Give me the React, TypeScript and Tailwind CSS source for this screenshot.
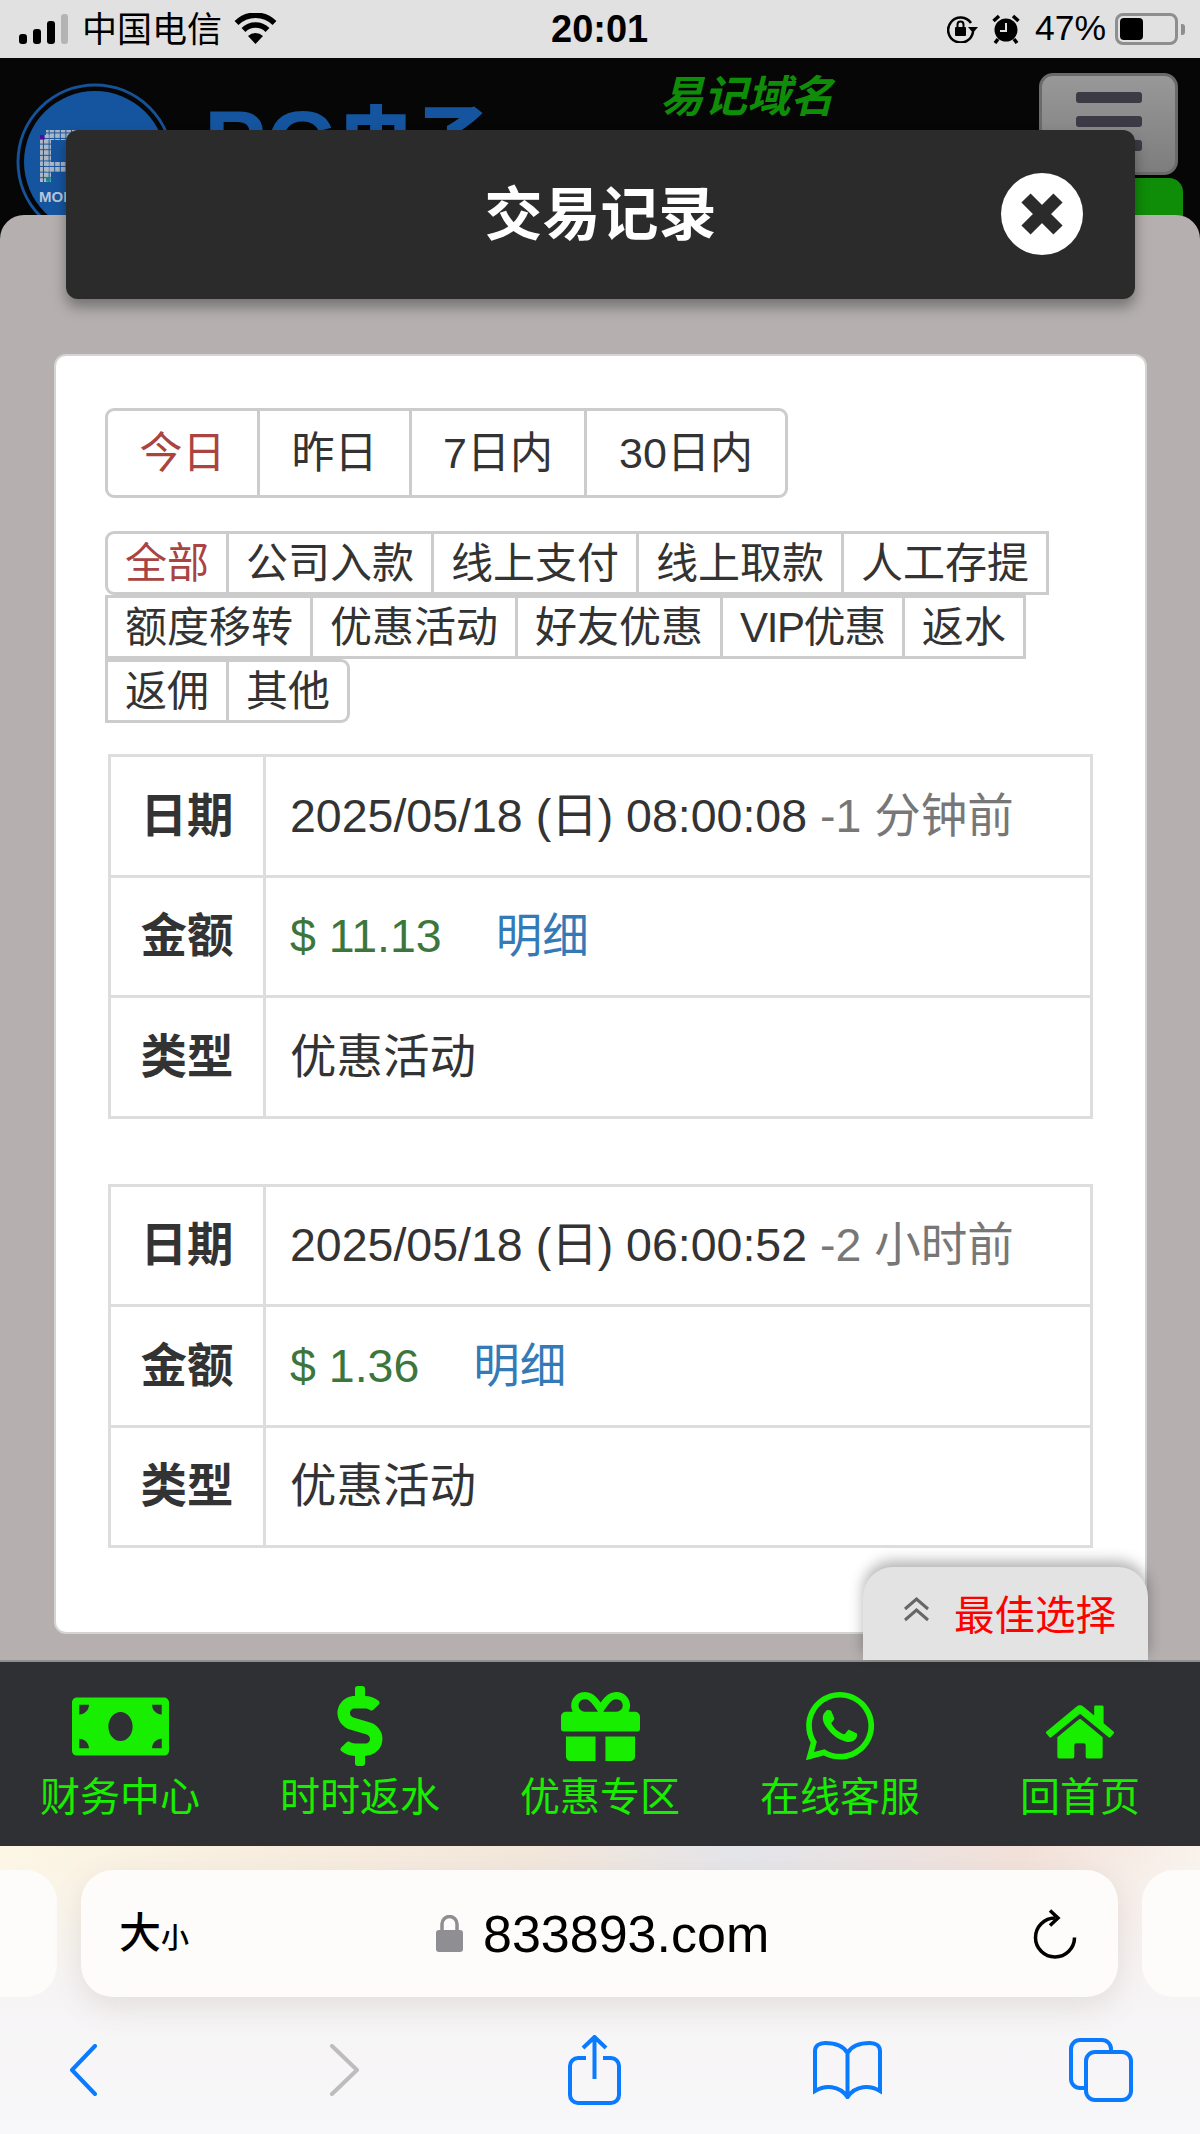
import React from 'react';
import { FaMoneyBill, FaDollarSign, FaGift, FaWhatsapp, FaHome } from 'react-icons/fa';

const cjk = "font-['Liberation_Sans','Noto_Sans_CJK_SC',sans-serif]";

const ranges = [
  { label: '今日', w: 'w-[152px]', on: true },
  { label: '昨日', w: 'w-[152px]' },
  { label: '7日内', w: 'w-[175px]' },
  { label: '30日内', w: 'w-[198px]' },
];

const typeRows = [
  [
    { label: '全部', on: true },
    { label: '公司入款' },
    { label: '线上支付' },
    { label: '线上取款' },
    { label: '人工存提' },
  ],
  [
    { label: '额度移转' },
    { label: '优惠活动' },
    { label: '好友优惠' },
    { label: 'VIP优惠', tight: true },
    { label: '返水' },
  ],
  [{ label: '返佣' }, { label: '其他' }],
];

const records = [
  { date: '2025/05/18 (日) 08:00:08', ago: '-1 分钟前', money: '$ 11.13', kind: '优惠活动' },
  { date: '2025/05/18 (日) 06:00:52', ago: '-2 小时前', money: '$ 1.36', kind: '优惠活动' },
];

const navItems = [
  { label: '财务中心', icon: <FaMoneyBill size={97} /> },
  { label: '时时返水', icon: <FaDollarSign size={80} /> },
  { label: '优惠专区', icon: <FaGift size={79} /> },
  { label: '在线客服', icon: <FaWhatsapp size={78} /> },
  { label: '回首页', icon: <FaHome size={68} className="mt-[12px]" /> },
];

function StatusBar() {
  return (
    <div className="flex h-[58px] items-center bg-[#e1e1e1] pl-[19px] pr-[15px] text-black">
      <div className="flex h-[30px] items-end gap-[6px]">
        <span className="h-[10px] w-[8px] rounded-[3px] bg-black" />
        <span className="h-[15px] w-[8px] rounded-[3px] bg-black" />
        <span className="h-[23px] w-[8px] rounded-[3px] bg-black" />
        <span className="h-[30px] w-[7px] rounded-[3px] bg-[#b4b4b4]" />
      </div>
      <span className="ml-[14px] text-[35px] leading-none">中国电信</span>
      <svg width="43" height="32" viewBox="0 0 43 32" className="ml-[12px]">
        <path d="M21.5 31 14 23a11 11 0 0 1 15 0z" fill="black" />
        <path d="M9.5 17a17 17 0 0 1 24 0" fill="none" stroke="black" strokeWidth="5.5" />
        <path d="M2.5 10a27 27 0 0 1 38 0" fill="none" stroke="black" strokeWidth="5.5" />
      </svg>
      <span className="ml-[274px] text-[38px] font-semibold leading-none">20:01</span>
      <div className="ml-auto flex items-center">
        <svg width="31" height="28" viewBox="0 0 31 28" fill="none" stroke="black" strokeWidth="2.5">
          <path d="M26 17a12.5 12.5 0 1 1-2-9" />
          <rect x="8" y="12" width="11" height="9" rx="1" fill="black" stroke="none" />
          <path d="M10.5 12V9.5a3 3 0 0 1 6 0V12" strokeWidth="2" />
          <path d="M21 12h10l-5 6z" fill="black" stroke="none" />
        </svg>
        <svg width="28" height="30" viewBox="0 0 28 30" className="ml-[14px]">
          <circle cx="14" cy="16" r="11.5" fill="black" />
          <path d="M14 9v8H8" fill="none" stroke="#e1e1e1" strokeWidth="2" />
          <path d="M1.5 7 7 2M26.5 7 21 2M6 25l-3 4M22 25l3 4" stroke="black" strokeWidth="3.5" />
        </svg>
        <span className="ml-[15px] text-[35.5px] leading-none">47%</span>
        <div className="ml-[9px] flex h-[32px] w-[63px] items-center rounded-[8px] border-[3px] border-[#8e8e8e] p-[2px]">
          <div className="h-full w-[23px] rounded-[4px] bg-black" />
        </div>
        <span className="ml-[3px] h-[11px] w-[4px] rounded-r-[3px] bg-[#8e8e8e]" />
      </div>
    </div>
  );
}

function Logo() {
  return (
    <svg width="160" height="160" viewBox="0 0 160 160" className="absolute left-[16px] top-[25px]">
      <defs>
        <pattern id="dots" width="5.6" height="5.6" patternUnits="userSpaceOnUse">
          <rect width="4.6" height="4.6" fill="#aeb6c2" />
        </pattern>
      </defs>
      <circle cx="79" cy="79" r="77" fill="none" stroke="#155298" strokeWidth="3" />
      <circle cx="79" cy="79" r="71" fill="#15559f" />
      <rect x="30" y="47" width="50" height="10" fill="url(#dots)" />
      <rect x="24" y="52" width="11" height="47" fill="url(#dots)" />
      <rect x="30" y="79" width="50" height="10" fill="url(#dots)" />
      <rect x="24" y="52" width="4.6" height="4.6" fill="#4a0fa0" />
      <rect x="30" y="94" width="4.6" height="4.6" fill="#0f8a8a" />
      <text x="23" y="119" fontSize="15" fontWeight="700" fill="#b9c6d8">
        MON
      </text>
    </svg>
  );
}

function SiteHeader() {
  return (
    <div className="relative h-full bg-[#060606]">
      <Logo />
      <div className="absolute left-[204px] top-[40px] flex items-start font-black leading-none text-[#15559f]">
        <span className="text-[93px]">PG</span>
        <span className="mt-[7px] text-[76px]">电子</span>
      </div>
      <span className="absolute left-[660px] top-[18px] text-[43.5px] font-bold italic leading-none text-[#0f8d08]">
        易记域名
      </span>
      <div className="absolute left-[1039px] top-[15px] flex h-[102px] w-[139px] flex-col items-center gap-[13px] rounded-[14px] border-[3px] border-[#6a6a6a] bg-[linear-gradient(180deg,#989898,#7d7d7d)] pt-[16px]">
        <span className="h-[11px] w-[66px] rounded-[3px] bg-[#3b3a45]" />
        <span className="h-[11px] w-[66px] rounded-[3px] bg-[#3b3a45]" />
        <span className="h-[11px] w-[66px] rounded-[3px] bg-[#3b3a45]" />
      </div>
      <div className="absolute left-[1100px] top-[120px] h-[40px] w-[83px] rounded-t-[14px] bg-[#0f8d08]" />
    </div>
  );
}

function RangeTabs() {
  return (
    <div className="flex h-[90px] w-fit overflow-hidden rounded-[9px] border-[3px] border-[#cccccc]">
      {ranges.map((r) => (
        <div
          key={r.label}
          className={`flex items-center justify-center border-r-[3px] border-[#cccccc] pt-[1px] text-[43px] last:border-r-0 ${r.w} ${r.on ? 'text-[#a94442]' : 'text-[#333333]'}`}
        >
          {r.label}
        </div>
      ))}
    </div>
  );
}

function TypeTabs() {
  return (
    <div className="mt-[33px] flex flex-col">
      {typeRows.map((row, i) => (
        <div key={i} className="flex">
          {row.map((t, j) => (
            <div
              key={t.label}
              className={`flex h-[64px] items-center whitespace-nowrap border-y-[3px] border-r-[3px] border-[#cccccc] px-[17px] text-[42px] ${j === 0 ? 'border-l-[3px]' : ''} ${t.on ? 'rounded-l-[9px] text-[#a94442]' : 'text-[#333333]'} ${i === 2 && j === 1 ? 'rounded-r-[9px]' : ''} ${t.tight ? 'tracking-[-1.4px]' : ''}`}
            >
              {t.label}
            </div>
          ))}
        </div>
      ))}
    </div>
  );
}

function RecordTable({ rec }: { rec: (typeof records)[number] }) {
  const rows = [
    {
      head: '日期',
      body: (
        <>
          <span className="text-[#333333]">{rec.date} </span>
          <span className="text-[#777777]">{rec.ago}</span>
        </>
      ),
    },
    {
      head: '金额',
      body: (
        <>
          <span className="text-[#3c763d]">{rec.money}</span>
          <span className="ml-[54px] text-[#337ab7]">明细</span>
        </>
      ),
    },
    { head: '类型', body: <span className="text-[#333333]">{rec.kind}</span> },
  ];
  return (
    <div className="ml-[3px] w-[985px] border-[3px] border-b-0 border-[#dddddd]">
      {rows.map((row) => (
        <div key={row.head} className="flex h-[120.5px] border-b-[3px] border-[#dddddd] pt-[2px] text-[46.5px]">
          <div className="-mt-[2px] flex w-[155px] items-center justify-center border-r-[3px] border-[#dddddd] pt-[2px] font-bold text-[#333333]">
            {row.head}
          </div>
          <div className="flex flex-1 items-center whitespace-pre pl-[24px]">{row.body}</div>
        </div>
      ))}
    </div>
  );
}

function RecordsModal() {
  return (
    <div className="absolute inset-x-0 bottom-0 top-[157px] rounded-t-[24px] bg-[#b5afaf]">
      <div className="ml-[54px] mt-[139px] h-[1280px] w-[1093px] rounded-[12px] border-2 border-[#d4d4d4] bg-white pl-[49px] pt-[52px]">
        <RangeTabs />
        <TypeTabs />
        <div className="mt-[31px] flex flex-col gap-[65px]">
          {records.map((rec) => (
            <RecordTable key={rec.date} rec={rec} />
          ))}
        </div>
      </div>
      <div className="absolute bottom-0 left-[863px] flex h-[93px] w-[285px] items-start gap-[24px] rounded-t-[30px] bg-[#e3e3e3] pl-[40px] pt-[26px] shadow-[0_-6px_14px_rgba(0,0,0,0.3)]">
        <svg width="27" height="25" viewBox="0 0 27 25" fill="none" stroke="#666666" strokeWidth="3" className="mt-[4px]">
          <path d="M2 12 13.5 2 25 12M2 23l11.5-10L25 23" />
        </svg>
        <span className="text-[40.500px] leading-[46px] text-[#ff0000]">最佳选择</span>
      </div>
    </div>
  );
}

function TitleBar() {
  return (
    <div className="absolute left-[66px] top-[72px] flex h-[169px] w-[1069px] items-center justify-center rounded-[12px] bg-[#2b2b2b] shadow-[0_8px_14px_rgba(0,0,0,0.35)]">
      <span className="text-[58px] font-bold leading-none text-white">交易记录</span>
      <div className="absolute right-[52px] top-[43px] flex h-[82px] w-[82px] items-center justify-center rounded-full bg-white">
        <svg width="42" height="42" viewBox="0 0 42 42" stroke="#2b2b2b" strokeWidth="13" strokeLinecap="butt">
          <path d="M5 5l32 32M37 5 5 37" />
        </svg>
      </div>
    </div>
  );
}

function BottomNav() {
  return (
    <div className="grid h-[186px] grid-cols-5 border-t-2 border-[#8f8f8f] bg-[#2f3033] text-[#17ee00]">
      {navItems.map((item) => (
        <div key={item.label} className="flex flex-col items-center pt-[24px]">
          <div className="flex h-[80px] items-center justify-center">{item.icon}</div>
          <span className="mt-[8px] text-[40px] leading-[46px]">{item.label}</span>
        </div>
      ))}
    </div>
  );
}

function SafariBar() {
  return (
    <div className="flex-1 bg-[linear-gradient(180deg,rgba(248,247,249,0)_0%,#f6f4f5_50%,#f8f7f9_100%),linear-gradient(90deg,#fdf6e4_0%,#f3e6da_45%,#e3e4ea_62%,#f2e0d8_85%,#f9f3ec_100%)]">
      <div className="flex gap-[24px] pt-[24px]">
        <div className="h-[127px] w-[57px] rounded-r-[32px] bg-[#fdfcfb]" />
        <div className="flex h-[127px] w-[1037px] items-center rounded-[32px] bg-[#fdfcfb] pl-[38px] pr-[41px] shadow-[0_10px_30px_rgba(120,100,90,0.15)]">
          <span className="w-[70px] whitespace-nowrap text-[42px] font-medium leading-none text-black">
            大<span className="text-[28px]">小</span>
          </span>
          <svg width="27" height="37" viewBox="0 0 27 37" className="ml-[247px]">
            <path d="M6 17V9a7.5 7.5 0 0 1 15 0v8" fill="none" stroke="#8e8e93" strokeWidth="3.5" />
            <rect x="0" y="15" width="27" height="22" rx="3" fill="#8e8e93" />
          </svg>
          <span className="ml-[20px] text-[52px] leading-none text-black">833893.com</span>
          <svg width="44" height="50" viewBox="0 0 44 50" fill="none" stroke="black" strokeWidth="3.500" className="ml-auto">
            <path d="M22 9A19.5 19.5 0 1 0 41.5 28.500" />
            <path d="M17 1.500 25 9l-8 7.500" />
          </svg>
        </div>
        <div className="h-[127px] flex-1 rounded-l-[32px] bg-[#fdfcfb]" />
      </div>
      <div className="mt-[36px] flex h-[74px] items-center pl-[69px] text-[#0a7aff]">
        <svg width="29" height="52" viewBox="0 0 29 52" fill="none" stroke="currentColor" strokeWidth="4" strokeLinecap="round" strokeLinejoin="round">
          <path d="M26 2 3 26l23 24" />
        </svg>
        <svg width="31" height="52" viewBox="0 0 31 52" fill="none" stroke="#bdbdbd" strokeWidth="4" strokeLinecap="round" strokeLinejoin="round" className="ml-[231px]">
          <path d="M3 2l25 24L3 50" />
        </svg>
        <svg width="53" height="70" viewBox="0 0 53 70" fill="none" stroke="currentColor" strokeWidth="4" className="ml-[208px]">
          <path d="M26.500 2v42M15 13 26.500 2 38 13" />
          <path d="M18 23h-8a8 8 0 0 0-8 8v29a8 8 0 0 0 8 8h33a8 8 0 0 0 8-8V31a8 8 0 0 0-8-8h-8" />
        </svg>
        <svg width="69" height="58" viewBox="0 0 69 58" fill="none" stroke="currentColor" strokeWidth="4" className="ml-[192px]">
          <path d="M34.500 12C30 4 20 2 12 2 6 2 2 5 2 10v40c10-6 24-6 32.500 6C43 44 57 44 67 50V10c0-5-4-8-10-8-8 0-18 2-22.500 10zm0 0v44" />
        </svg>
        <svg width="64" height="64" viewBox="0 0 64 64" fill="none" stroke="currentColor" strokeWidth="4" className="ml-[187px]">
          <path d="M15 50h-4a9 9 0 0 1-9-9V11a9 9 0 0 1 9-9h22a9 9 0 0 1 9 9v2" />
          <rect x="17" y="14" width="45" height="48" rx="9" />
        </svg>
      </div>
    </div>
  );
}

export default function App() {
  return (
    <div className={`flex h-[2134px] w-[1200px] flex-col overflow-hidden ${cjk}`}>
      <StatusBar />
      <div className="relative h-[1602px] flex-none">
        <SiteHeader />
        <RecordsModal />
        <TitleBar />
      </div>
      <BottomNav />
      <SafariBar />
    </div>
  );
}
